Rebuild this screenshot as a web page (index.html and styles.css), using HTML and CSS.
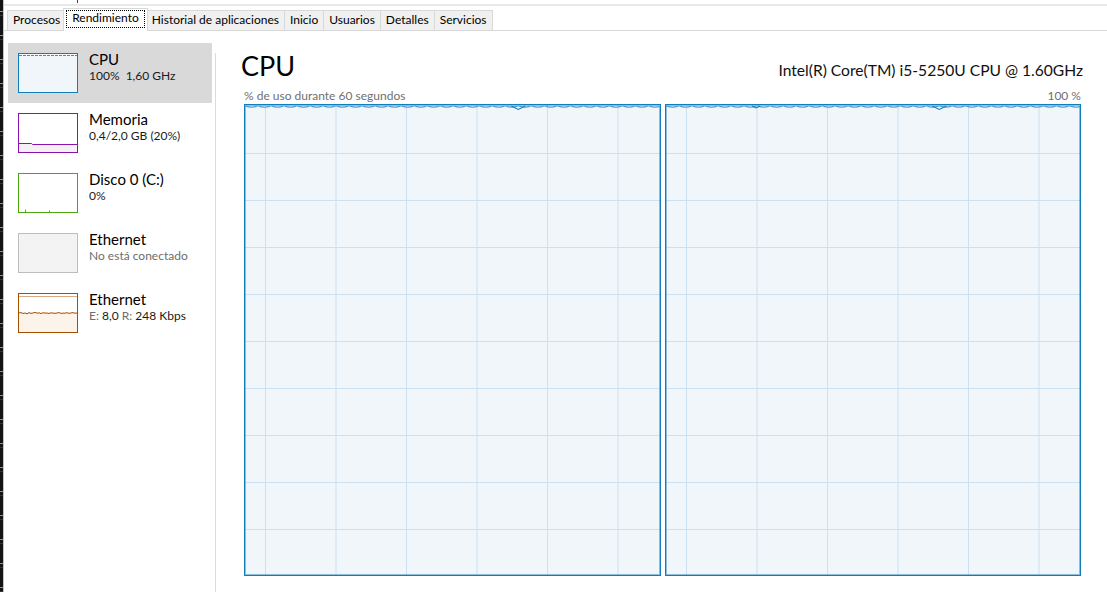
FILE: index.html
```html
<!DOCTYPE html>
<html lang="es">
<head>
    <meta charset="UTF-8">
    <title>Administrador de tareas - Rendimiento</title>
    <link rel="stylesheet" href="styles.css">
</head>
<body>
    <div class="desk-edge"></div>

    <div class="taskmgr">
        <div class="top-strip"><span class="tick"></span></div>

        <div class="tabs">
            <div class="tab">Procesos</div>
            <div class="tab is-active"><span class="focus-ring">Rendimiento</span></div>
            <div class="tab">Historial de aplicaciones</div>
            <div class="tab">Inicio</div>
            <div class="tab">Usuarios</div>
            <div class="tab">Detalles</div>
            <div class="tab">Servicios</div>
        </div>

        <div class="content">
            <div class="sidebar">
                <div class="perf-item is-selected">
                    <svg class="thumb" width="60" height="40" viewBox="0 0 60 40">
                        <rect x="0.5" y="0.5" width="59" height="39" fill="#f1f6fa" stroke="#117dbb"/>
                        <path d="M1 2.5 H59" stroke="#3d8fc6" stroke-dasharray="3 1"/>
                    </svg>
                    <div class="perf-text">
                        <div class="perf-name">CPU</div>
                        <div class="perf-value">100%&nbsp; 1,60 GHz</div>
                    </div>
                </div>

                <div class="perf-item">
                    <svg class="thumb" width="60" height="40" viewBox="0 0 60 40">
                        <rect x="0.5" y="0.5" width="59" height="39" fill="#fff" stroke="#8b12ae"/>
                        <path d="M1 30 H14 V31 H59 V39 H1 Z" fill="#f4f1f5"/>
                        <path d="M1 30.5 H13.5 L14.5 31.5 H59" fill="none" stroke="#8b12ae"/>
                    </svg>
                    <div class="perf-text">
                        <div class="perf-name">Memoria</div>
                        <div class="perf-value">0,4/2,0 GB (20%)</div>
                    </div>
                </div>

                <div class="perf-item">
                    <svg class="thumb" width="60" height="40" viewBox="0 0 60 40">
                        <rect x="0.5" y="0.5" width="59" height="39" fill="#fff" stroke="#4da60c"/>
                        <path d="M7.5 39 V36.5 M31.5 39 V37.5" stroke="#4da60c"/>
                    </svg>
                    <div class="perf-text">
                        <div class="perf-name">Disco 0 (C:)</div>
                        <div class="perf-value">0%</div>
                    </div>
                </div>

                <div class="perf-item">
                    <svg class="thumb" width="60" height="40" viewBox="0 0 60 40">
                        <rect x="0.5" y="0.5" width="59" height="39" fill="#f3f3f3" stroke="#bdbdbd"/>
                    </svg>
                    <div class="perf-text">
                        <div class="perf-name">Ethernet</div>
                        <div class="perf-value muted">No está conectado</div>
                    </div>
                </div>

                <div class="perf-item">
                    <svg class="thumb" width="60" height="40" viewBox="0 0 60 40">
                        <rect x="0.5" y="0.5" width="59" height="39" fill="#fff" stroke="#a74f01"/>
                        <path d="M1 3.5 H59" stroke="#d8a982"/>
                        <path d="M1 20 L3 19.5 L5 20.5 L7 20 L9 20.8 L11 19.6 L13 20.4 L15 20 L17 19.3 L19 20.2 L21 19.8 L23 20.6 L25 19.7 L27 20.1 L29 20 L31 20.5 L33 19.8 L35 20.1 L37 20.3 L39 20 L41 19.6 L43 20.4 L45 20.1 L47 20.2 L49 19.7 L51 20.3 L53 20 L55 19.6 L57 20.2 L59 20 V39 H1 Z" fill="#fcf3ea"/>
                        <path d="M1 20 L3 19.5 L5 20.5 L7 20 L9 20.8 L11 19.6 L13 20.4 L15 20 L17 19.3 L19 20.2 L21 19.8 L23 20.6 L25 19.7 L27 20.1 L29 20 L31 20.5 L33 19.8 L35 20.1 L37 20.3 L39 20 L41 19.6 L43 20.4 L45 20.1 L47 20.2 L49 19.7 L51 20.3 L53 20 L55 19.6 L57 20.2 L59 20" fill="none" stroke="#a74f01"/>
                    </svg>
                    <div class="perf-text">
                        <div class="perf-name">Ethernet</div>
                        <div class="perf-value"><span class="muted">E:</span> 8,0 <span class="muted">R:</span> 248 Kbps</div>
                    </div>
                </div>
            </div>

            <div class="divider"></div>

            <div class="main">
                <div class="main-head">
                    <div class="main-title">CPU</div>
                    <div class="cpu-model">Intel(R) Core(TM) i5-5250U CPU @ 1.60GHz</div>
                </div>
                <div class="graph-caption">
                    <span>% de uso durante 60 segundos</span>
                    <span>100 %</span>
                </div>

                <div class="graphs">
                    <div class="graph">
                        <svg class="graph-trace" viewBox="0 0 414 6" preserveAspectRatio="none">
                            <defs>
                                <pattern id="waveA" width="13" height="6" patternUnits="userSpaceOnUse">
                                    <path d="M0.5 1 Q6.5 3.4 12.5 1" fill="none" stroke="#4a9ad0"/>
                                </pattern>
                            </defs>
                            <rect width="414" height="6" fill="url(#waveA)"/>
                            <path d="M266 1 L273 4.5 L280 1" fill="none" stroke="#117dbb"/>
                        </svg>
                    </div>
                    <div class="graph">
                        <svg class="graph-trace" viewBox="0 0 414 6" preserveAspectRatio="none">
                            <defs>
                                <pattern id="waveB" width="13" height="6" patternUnits="userSpaceOnUse">
                                    <path d="M0.5 1 Q6.5 3.4 12.5 1" fill="none" stroke="#4a9ad0"/>
                                </pattern>
                            </defs>
                            <rect width="414" height="6" fill="url(#waveB)"/>
                            <path d="M86 1 L90 3 L94 1 M266 1 L273 4.5 L280 1" fill="none" stroke="#117dbb"/>
                        </svg>
                    </div>
                </div>
            </div>
        </div>
    </div>
</body>
</html>
```

FILE: styles.css
```css
* {
    box-sizing: border-box;
}

body {
    margin: 0;
    width: 1107px;
    height: 592px;
    overflow: hidden;
    display: flex;
    background: #fff;
    color: #000;
    font-family: Lato, "Noto Sans", sans-serif;
}

/* sliver of the window behind */
.desk-edge {
    flex: none;
    width: 4px;
    border-right: 1px solid #a8cdec;
    background: repeating-linear-gradient(to bottom,
        #131313 0 11px, #8d8d8d 11px 12px, #131313 12px 15px,
        #6e1d1d 15px 16px, #131313 16px 24px);
}

.taskmgr {
    flex: 1;
    min-width: 0;
    display: flex;
    flex-direction: column;
}

.top-strip {
    height: 6px;
    padding-left: 73px;
    border-bottom: 2px solid #e8e8e8;
}

.tick {
    display: block;
    width: 1px;
    height: 3px;
    background: #8c1b1b;
}

/* Tabs */
.tabs {
    display: flex;
    align-items: flex-end;
    height: 25px;
    padding: 2px 0 0 3px;
    border-bottom: 1px solid #d9d9d9;
}

.tab {
    height: 20px;
    margin-right: -1px;
    padding: 0 5px;
    border: 1px solid #d9d9d9;
    border-bottom: none;
    background: #f0f0f0;
    font-size: 12px;
    line-height: 17px;
    white-space: nowrap;
}

.tab.is-active {
    position: relative;
    z-index: 1;
    height: 23px;
    margin: 0 -2px -1px -2px;
    padding: 1px 2px 0;
    background: #fff;
}

.focus-ring {
    display: block;
    height: 18px;
    padding: 0 5px 3px;
    border: 1px dotted #000;
    line-height: 13px;
}

/* Body */
.content {
    flex: 1;
    min-height: 0;
    display: flex;
}

.sidebar {
    flex: none;
    width: 211px;
    padding: 12px 0 0 4px;
}

.perf-item {
    display: flex;
    width: 204px;
    height: 60px;
    padding: 10px 0 0 10px;
}

.perf-item.is-selected {
    background: #d9d9d9;
}

.thumb {
    flex: none;
    display: block;
}

.perf-text {
    margin: -2px 0 0 11px;
}

.perf-name {
    font-size: 15px;
    line-height: 16px;
}

.perf-value {
    font-size: 12px;
    line-height: 18px;
    color: #1a1a1a;
}

.muted {
    color: #6d6d6d;
}

.divider {
    flex: none;
    width: 1px;
    margin-top: 22px;
    background: #dadada;
}

.main {
    flex: 1;
    min-width: 0;
    padding: 18px 26px 0 28px;
}

.main-head {
    display: flex;
    justify-content: space-between;
    align-items: baseline;
    height: 34px;
    margin: 0 -2px 0 -3px;
}

.main-title {
    font-size: 27px;
    line-height: 34px;
}

.cpu-model {
    font-size: 15.6px;
    color: #111;
}

.graph-caption {
    display: flex;
    justify-content: space-between;
    margin-top: 6px;
    font-size: 12px;
    line-height: 14px;
    color: #707070;
}

.graphs {
    display: grid;
    grid-template-columns: 1fr 1fr;
    gap: 4px;
    height: 472px;
    margin-top: 1px;
}

.graph {
    position: relative;
    border: 1px solid #117dbb;
    box-shadow: inset 0 0 0 1px rgba(17, 125, 187, 0.45);
    background:
        linear-gradient(to right, #cbe0f0 1px, transparent 1px) 20px 0 / 70.5px 100%,
        linear-gradient(to bottom, #cbe0f0 1px, transparent 1px) 0 1px / 100% 47px,
        #f1f6fa;
}

.graph-trace {
    position: absolute;
    top: 0;
    left: 0;
    width: 100%;
    height: 6px;
}
```
